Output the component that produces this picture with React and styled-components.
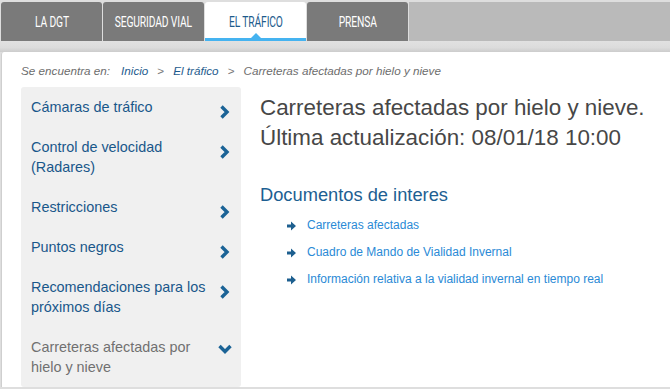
import React from 'react';
import styled, { createGlobalStyle } from 'styled-components';

const GlobalStyle = createGlobalStyle`
  html, body { margin: 0; padding: 0; background: #ffffff; }
  body { font-family: "Liberation Sans", Arial, sans-serif; }
`;

const Page = styled.div`
  width: 670px;
  height: 389px;
  overflow: hidden;
  background: #dedede;
  display: flex;
  flex-direction: column;
`;

const NavBar = styled.nav`
  flex: none;
  margin-top: 2px;
  height: 39px;
  display: flex;
  gap: 1px;
  padding-left: 1px;
  background: linear-gradient(to right, #dedede 0, #dedede 409px, #bababa 409px);
`;

const Tab = styled.a`
  position: relative;
  width: 101px;
  flex: none;
  display: flex;
  align-items: center;
  justify-content: center;
  border-radius: 3px 3px 0 0;
  background: ${(p) => (p.$active ? '#ffffff' : '#7a7a7a')};
  color: ${(p) => (p.$active ? '#1d5b8c' : '#ffffff')};
  font-family: "Roboto", sans-serif;
  font-size: 14.5px;
  text-transform: uppercase;
  text-decoration: none;
  box-sizing: border-box;
  padding-top: ${(p) => (p.$active ? '5px' : '2px')};
  border-bottom: ${(p) => (p.$active ? '3px solid #45b3f0' : 'none')};
`;

const TabLabel = styled.span`
  display: inline-block;
  transform: scaleX(0.71);
  letter-spacing: -0.2px;
  white-space: nowrap;
`;

const Notch = styled.span`
  position: absolute;
  left: 50%;
  bottom: 0;
  margin-left: -5px;
  width: 0;
  height: 0;
  border-left: 5px solid transparent;
  border-right: 5px solid transparent;
  border-bottom: 5px solid #45b3f0;
`;

const Shade = styled.div`
  flex: none;
  height: 11px;
  background: linear-gradient(to bottom, #e1e1e1 0, #dcdcdc 60%, #cccccc 100%);
`;

const Panel = styled.div`
  flex: none;
  background: #ffffff;
  margin-left: 1px;
  border-left: 1px solid #cfcfcf;
  border-radius: 3px 0 0 0;
  padding: 9px 0 0 19px;
`;

const Breadcrumb = styled.div`
  display: flex;
  align-items: center;
  font-size: 11.7px;
  font-style: italic;
  color: #6d6d6d;
  height: 18px;
`;

const Crumb = styled.a`
  text-decoration: none;
  color: ${(p) => (p.$current ? '#6d6d6d' : '#1e5b8e')};
`;

const Sep = styled.span`
  color: #777777;
  font-style: normal;
  margin: 0 9px;
`;

const Lead = styled.span`
  margin-right: 11px;
`;

const Body = styled.div`
  display: flex;
  margin-top: 8px;
  gap: 19px;
`;

const Sidebar = styled.ul`
  list-style: none;
  margin: 0;
  padding: 0;
  width: 220px;
  flex: none;
  background: #f0f0f0;
  border-radius: 3px;
`;

const SideItem = styled.li`
  display: flex;
  align-items: flex-start;
  justify-content: space-between;
  padding: 10px 9px 10px 10px;
  font-size: 14.4px;
  line-height: 20px;
  color: ${(p) => (p.$active ? '#707070' : '#19578a')};
`;

const SideText = styled.span`
  width: 182px;
`;

const ChevronBox = styled.span`
  display: flex;
  height: 20px;
  align-items: flex-start;
  padding-top: ${(p) => (p.$down ? '5px' : '8px')};
  box-sizing: border-box;
  overflow: visible;
`;

const Main = styled.main`
  padding-top: 6px;
  flex: 1;
`;

const Title = styled.h1`
  margin: 0;
  font-weight: normal;
  font-size: 22.4px;
  line-height: 29.5px;
  color: #474747;
  white-space: nowrap;
`;

const SubTitle = styled.h2`
  margin: 32px 0 0;
  font-weight: normal;
  font-size: 18.3px;
  line-height: 22px;
  color: #1d5f92;
`;

const DocList = styled.ul`
  list-style: none;
  margin: 5px 0 0;
  padding: 0 0 0 27px;
`;

const DocItem = styled.li`
  display: flex;
  align-items: center;
  gap: 11px;
  height: 27px;
  font-size: 12px;
  color: #2a8ad6;
`;

const ArrowBox = styled.span`
  display: flex;
  margin-top: 3px;
`;

const Chevron = ({ down }) => (
  <ChevronBox $down={down}>
    <svg width="14" height="14" viewBox="0 0 14 14" style={{ flex: 'none' }}>
      <polyline
        points={down ? '1.5,4 7,9.5 12.5,4' : '3.5,1.5 9,7 3.5,12.5'}
        fill="none"
        stroke="#1b6396"
        strokeWidth="3.4"
      />
    </svg>
  </ChevronBox>
);

const Arrow = () => (
  <ArrowBox>
    <svg width="9" height="10" viewBox="0 0 9 10">
      <path d="M0 3.6 H4 V0.5 L9 5 L4 9.5 V6.4 H0 Z" fill="#1d5f8f" />
    </svg>
  </ArrowBox>
);

const tabs = ['La DGT', 'Seguridad vial', 'El tráfico', 'Prensa'];

const side = [
  { t: 'Cámaras de tráfico' },
  { t: 'Control de velocidad (Radares)' },
  { t: 'Restricciones' },
  { t: 'Puntos negros' },
  { t: 'Recomendaciones para los próximos días' },
  { t: 'Carreteras afectadas por hielo y nieve', active: true },
];

const docs = [
  'Carreteras afectadas',
  'Cuadro de Mando de Vialidad Invernal',
  'Información relativa a la vialidad invernal en tiempo real',
];

const App = () => {
  return (
    <Page>
      <GlobalStyle />
      <NavBar>
        {tabs.map((t, i) => (
          <Tab key={t} $active={i === 2}>
            <TabLabel>{t}</TabLabel>
            {i === 2 && <Notch />}
          </Tab>
        ))}
      </NavBar>
      <Shade />
      <Panel>
        <Breadcrumb>
          <Lead>Se encuentra en:</Lead>
          <Crumb>Inicio</Crumb>
          <Sep>&gt;</Sep>
          <Crumb>El tráfico</Crumb>
          <Sep>&gt;</Sep>
          <Crumb $current>Carreteras afectadas por hielo y nieve</Crumb>
        </Breadcrumb>
        <Body>
          <Sidebar>
            {side.map((s) => (
              <SideItem key={s.t} $active={s.active}>
                <SideText>{s.t}</SideText>
                <Chevron down={s.active} />
              </SideItem>
            ))}
          </Sidebar>
          <Main>
            <Title>
              Carreteras afectadas por hielo y nieve.
              <br />
              Última actualización: 08/01/18 10:00
            </Title>
            <SubTitle>Documentos de interes</SubTitle>
            <DocList>
              {docs.map((d) => (
                <DocItem key={d}>
                  <Arrow />
                  <span>{d}</span>
                </DocItem>
              ))}
            </DocList>
          </Main>
        </Body>
      </Panel>
    </Page>
  );
};

export default App;
